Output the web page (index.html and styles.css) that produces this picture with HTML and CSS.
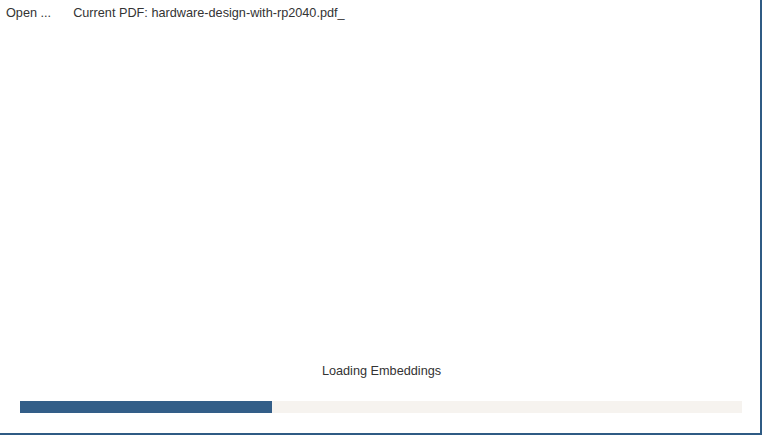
FILE: index.html
```html
<!DOCTYPE html>
<html>
<head>
<meta charset="utf-8">
<link rel="stylesheet" href="styles.css">
</head>
<body>
<div class="app">
  <div class="toolbar">
    <span class="open">Open ...</span>
    <span class="current">Current PDF: hardware-design-with-rp2040.pdf_</span>
  </div>
  <div class="spacer"></div>
  <div class="loading">
    <div class="label">Loading Embeddings</div>
    <div class="track"><div class="fill" style="width:34.9%"></div></div>
  </div>
</div>
</body>
</html>
```
FILE: styles.css
```css
html, body {
  margin: 0;
  padding: 0;
  background: #ffffff;
}
.app {
  box-sizing: border-box;
  width: 762px;
  height: 435px;
  border-right: 2px solid #2f5b84;
  border-bottom: 2px solid #2f5b84;
  display: flex;
  flex-direction: column;
  font-family: "Liberation Sans", Arial, sans-serif;
  color: #333333;
}
.toolbar {
  display: flex;
  gap: 22px;
  padding: 6px 0 0 6px;
  font-size: 12.7px;
  line-height: 15px;
}
.spacer {
  flex: 1;
}
.loading {
  display: flex;
  flex-direction: column;
  align-items: center;
  padding: 0 18px 20px 20px;
}
.label {
  font-size: 12.7px;
  line-height: 15px;
  margin-bottom: 22px;
  margin-left: 1px;
}
.track {
  align-self: stretch;
  height: 12px;
  background: #f6f3ef;
}
.fill {
  height: 100%;
  background: #335e88;
}
```
